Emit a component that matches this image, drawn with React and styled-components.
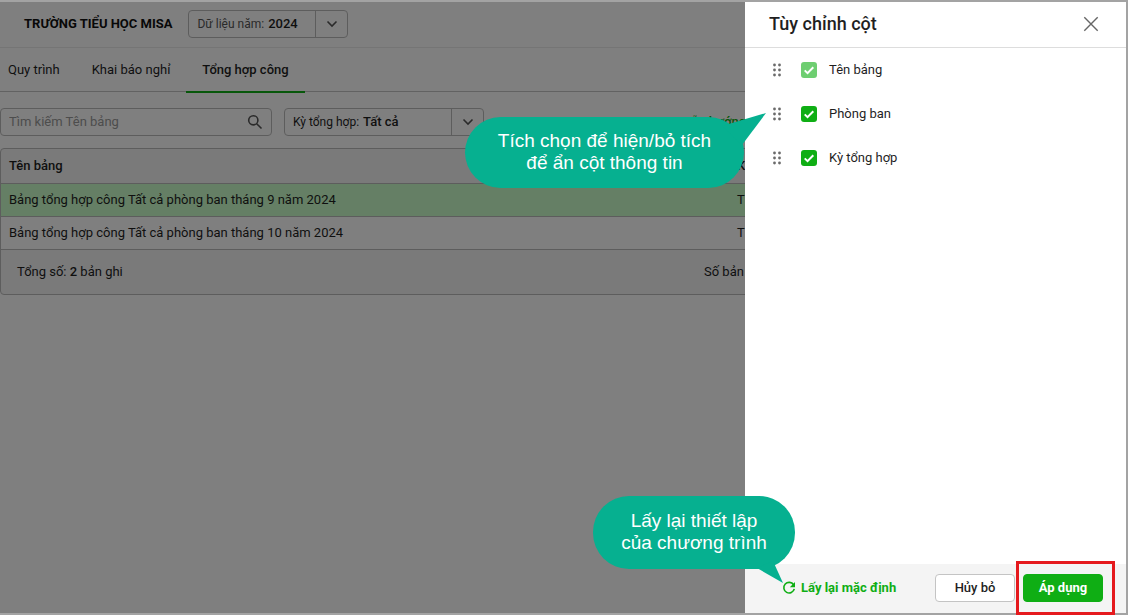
import React, { useState } from "react";
import styled, { createGlobalStyle } from "styled-components";

const GlobalStyle = createGlobalStyle`
  * {
    box-sizing: border-box;
  }
  body {
    margin: 0;
    font-family: Roboto, "Noto Sans", sans-serif;
    font-size: 13px;
    line-height: 16px;
    color: #1f1f1f;
  }
  button, input, select {
    font: inherit;
    color: inherit;
  }
`;

const Frame = styled.div`
  position: relative;
  min-height: 100vh;
  border: 2px solid #a3a3a3;
  border-left: none;
`;

const TopBar = styled.header`
  display: flex;
  align-items: center;
  gap: 16px;
  height: 46px;
  padding: 0 24px 2px;
  background: #fff;
  border-bottom: 1px solid #ebebeb;
  h1 {
    margin: 0;
    font-size: 13px;
    font-weight: 700;
    color: #111;
  }
`;

const SelectBox = styled.div`
  display: flex;
  align-items: center;
  width: ${(props) => props.$width};
  height: 28px;
  padding-left: 8px;
  border: 1px solid #bbb;
  border-radius: 4px;
  background: #fff;
  label {
    font-size: 12px;
    white-space: nowrap;
    color: ${(props) => (props.$soft ? "#555" : "#1f1f1f")};
  }
  select {
    flex: 1;
    min-width: 0;
    height: 26px;
    padding: 0 4px;
    border: none;
    outline: none;
    background: transparent;
    font-weight: 500;
    appearance: none;
  }
`;
const Arrow = styled.span`
  display: flex;
  align-items: center;
  justify-content: center;
  width: 32px;
  height: 26px;
  border-left: 1px solid #bbb;
`;

const Tabs = styled.nav`
  display: flex;
  height: 44px;
  background: #fff;
  border-bottom: 1px solid #c4c4c4;
`;
const Tab = styled.a`
  display: flex;
  align-items: center;
  height: 45px;
  padding: 0 16px;
  border-bottom: 2px solid ${(props) => (props.$active ? "#0fae14" : "transparent")};
  font-weight: ${(props) => (props.$active ? 500 : 400)};
  color: inherit;
  text-decoration: none;
  &:first-child {
    padding-left: 8px;
  }
`;

const Toolbar = styled.div`
  display: flex;
  align-items: center;
  gap: 12px;
  padding: 16px 0 12px;
`;
const SearchBox = styled.div`
  display: flex;
  align-items: center;
  width: 272px;
  height: 28px;
  padding: 0 8px;
  border: 1px solid #bbb;
  border-radius: 4px;
  background: #fff;
  input {
    flex: 1;
    min-width: 0;
    padding: 0;
    border: none;
    outline: none;
    background: transparent;
  }
  input::placeholder {
    color: #9a9a9a;
    opacity: 1;
  }
`;
const GuideLink = styled.a`
  margin-left: 184px;
  font-weight: 500;
  color: #0fae14;
  text-decoration: none;
  white-space: nowrap;
`;

const TableCard = styled.section`
  border: 1px solid #bbb;
  border-radius: 4px;
  background: #f4f4f4;
  overflow: hidden;
`;
const Table = styled.table`
  width: 100%;
  border-collapse: collapse;
  table-layout: fixed;
  th,
  td {
    height: 33px;
    padding: 0 8px;
    border-bottom: 1px solid #bbb;
    text-align: left;
  }
  th {
    height: 34px;
    font-weight: 500;
  }
  th:first-child {
    width: 728px;
  }
`;
const Row = styled.tr`
  background: ${(props) => (props.$active ? "#caffca" : "#fff")};
`;
const TableFooter = styled.footer`
  display: flex;
  height: 44px;
  align-items: center;
  padding: 0 16px;
  b {
    font-weight: 500;
  }
  p {
    flex: 0 0 687px;
    margin: 0;
  }
`;

const Overlay = styled.div`
  position: absolute;
  inset: 0;
  background: rgba(0, 0, 0, 0.5);
`;

const Drawer = styled.aside`
  position: absolute;
  top: 0;
  right: 0;
  bottom: 0;
  display: flex;
  flex-direction: column;
  width: 381px;
  background: #fff;
`;
const DrawerHeader = styled.header`
  display: flex;
  align-items: center;
  justify-content: space-between;
  height: 46px;
  padding: 0 23px 2px 24px;
  border-bottom: 1px solid #ddd;
  h2 {
    margin: 0;
    font-size: 18px;
    line-height: 24px;
    font-weight: 500;
  }
`;
const CloseButton = styled.button`
  display: flex;
  align-items: center;
  justify-content: center;
  width: 24px;
  height: 24px;
  padding: 0;
  border: none;
  background: none;
  cursor: pointer;
`;
const ColumnList = styled.ul`
  flex: 1;
  margin: 0;
  padding: 0 24px;
  list-style: none;
`;
const ColumnItem = styled.li`
  display: flex;
  align-items: center;
  gap: 16px;
  height: 44px;
  label {
    display: flex;
    align-items: center;
    gap: 12px;
  }
`;
const Checkbox = styled.input`
  appearance: none;
  width: 16px;
  height: 16px;
  margin: 0;
  border: 1px solid #bbb;
  border-radius: 3px;
  &:checked {
    border: none;
    background: #0fae14
      url("data:image/svg+xml,%3Csvg xmlns='http://www.w3.org/2000/svg' viewBox='0 0 16 16'%3E%3Cpath d='M3.7 8.4l2.8 2.7 5.8-5.8' fill='none' stroke='%23fff' stroke-width='2'/%3E%3C/svg%3E");
  }
  &:disabled {
    opacity: 0.6;
  }
`;

const DrawerFooter = styled.footer`
  display: flex;
  align-items: center;
  gap: 8px;
  height: 49px;
  padding: 0 23px 2px 36px;
  background: #f4f4f4;
`;
const ResetButton = styled.button`
  display: flex;
  align-items: center;
  gap: 4px;
  margin-right: auto;
  padding: 0;
  border: none;
  background: none;
  font-weight: 700;
  color: #0fae14;
  cursor: pointer;
`;
const Button = styled.button`
  width: 80px;
  height: 28px;
  padding: 0;
  border: 1px solid ${(props) => (props.$primary ? "#0fae14" : "#c4c4c4")};
  border-radius: 4px;
  background: ${(props) => (props.$primary ? "#0fae14" : "#fff")};
  color: ${(props) => (props.$primary ? "#fff" : "#1f1f1f")};
  font-weight: ${(props) => (props.$primary ? 700 : 500)};
  cursor: pointer;
`;
/* red outline that sits around the button */
const Highlight = styled.div`
  position: relative;
  display: flex;
  &::after {
    content: "";
    position: absolute;
    inset: -13px -12px -13px -7px;
    border: 3px solid #e5191d;
    pointer-events: none;
  }
`;

const Callout = styled.div`
  position: absolute;
  display: flex;
  align-items: center;
  justify-content: center;
  padding-bottom: 2px;
  border-radius: 36px;
  background: #06b090;
  color: #fff;
  font-family: "Liberation Sans", Arial, sans-serif;
  font-size: 19px;
  line-height: 22px;
  text-align: center;
  svg {
    position: absolute;
    overflow: visible;
  }
`;
const ColumnCallout = styled(Callout)`
  top: 115px;
  left: -280px;
  width: 279px;
  height: 71px;
  svg {
    top: -4px;
    right: -22px;
  }
`;
const ResetCallout = styled(Callout)`
  bottom: 44px;
  left: -152px;
  width: 202px;
  height: 73px;
  svg {
    right: 12px;
    bottom: -14px;
  }
`;

const ChevronIcon = () => (
  <svg width="12" height="8" viewBox="0 0 12 8" fill="none" stroke="#555" strokeWidth="1.6">
    <path d="M1.5 1.5L6 6l4.5-4.5" />
  </svg>
);
const SearchIcon = () => (
  <svg width="16" height="16" viewBox="0 0 16 16" fill="none" stroke="#555" strokeWidth="1.6">
    <circle cx="6.3" cy="6.3" r="4.6" />
    <path d="M9.7 9.7l4.8 4.8" />
  </svg>
);
const CloseIcon = () => (
  <svg width="16" height="16" viewBox="0 0 16 16" stroke="#666" strokeWidth="1.4">
    <path d="M1.3 1.3l13.4 13.4M14.7 1.3L1.3 14.7" />
  </svg>
);
const GripIcon = () => (
  <svg width="16" height="16" viewBox="0 0 16 16" fill="#6a6a6a">
    {[3, 8, 13].map((y) => (
      <React.Fragment key={y}>
        <circle cx="5.5" cy={y} r="1.4" />
        <circle cx="10.5" cy={y} r="1.4" />
      </React.Fragment>
    ))}
  </svg>
);
const ReloadIcon = () => (
  <svg width="16" height="16" viewBox="0 0 16 16" fill="none">
    <path d="M12.6 4.8A5.3 5.3 0 1 0 13.3 8.9" stroke="#0fae14" strokeWidth="1.6" />
    <path d="M14 2v5.2H8.8z" fill="#0fae14" />
  </svg>
);

const rows = [
  { id: 1, name: "Bảng tổng hợp công Tất cả phòng ban tháng 9 năm 2024", period: "Tháng 9" },
  { id: 2, name: "Bảng tổng hợp công Tất cả phòng ban tháng 10 năm 2024", period: "Tháng 10" },
];

function App() {
  const [columns, setColumns] = useState([
    { id: "name", label: "Tên bảng", checked: true, locked: true },
    { id: "department", label: "Phòng ban", checked: true },
    { id: "period", label: "Kỳ tổng hợp", checked: true },
  ]);

  const handleToggle = (id) => {
    setColumns(columns.map((col) => (col.id === id ? { ...col, checked: !col.checked } : col)));
  };

  return (
    <>
      <GlobalStyle />
      <Frame>
        <TopBar>
          <h1>TRƯỜNG TIỂU HỌC MISA</h1>
          <SelectBox $width="160px" $soft>
            <label htmlFor="year">Dữ liệu năm:</label>
            <select id="year">
              <option>2024</option>
            </select>
            <Arrow>
              <ChevronIcon />
            </Arrow>
          </SelectBox>
        </TopBar>
        <Tabs>
          <Tab href="#process">Quy trình</Tab>
          <Tab href="#leave">Khai báo nghỉ</Tab>
          <Tab href="#summary" $active>
            Tổng hợp công
          </Tab>
        </Tabs>
        <main>
          <Toolbar>
            <SearchBox>
              <input type="text" aria-label="Tìm kiếm" placeholder="Tìm kiếm Tên bảng" />
              <SearchIcon />
            </SearchBox>
            <SelectBox $width="200px">
              <label htmlFor="period">Kỳ tổng hợp:</label>
              <select id="period">
                <option>Tất cả</option>
              </select>
              <Arrow>
                <ChevronIcon />
              </Arrow>
            </SelectBox>
            <GuideLink href="#guide">Mẫu hướng dẫn</GuideLink>
          </Toolbar>
          <TableCard>
            <Table>
              <thead>
                <tr>
                  <th>Tên bảng</th>
                  <th>Kỳ tổng hợp</th>
                </tr>
              </thead>
              <tbody>
                {rows.map((row) => (
                  <Row key={row.id} $active={row.id === 1}>
                    <td>{row.name}</td>
                    <td>{row.period}</td>
                  </Row>
                ))}
              </tbody>
            </Table>
            <TableFooter>
              <p>
                Tổng số: <b>2</b> bản ghi
              </p>
              <span>Số bản ghi/trang</span>
            </TableFooter>
          </TableCard>
        </main>

        <Overlay />

        <Drawer>
          <DrawerHeader>
            <h2>Tùy chỉnh cột</h2>
            <CloseButton aria-label="Đóng">
              <CloseIcon />
            </CloseButton>
          </DrawerHeader>
          <ColumnList>
            {columns.map((col) => (
              <ColumnItem key={col.id}>
                <GripIcon />
                <label>
                  <Checkbox
                    type="checkbox"
                    checked={col.checked}
                    disabled={col.locked}
                    onChange={() => handleToggle(col.id)}
                  />
                  {col.label}
                </label>
              </ColumnItem>
            ))}
          </ColumnList>
          <DrawerFooter>
            <ResetButton>
              <ReloadIcon />
              Lấy lại mặc định
            </ResetButton>
            <Button>Hủy bỏ</Button>
            <Highlight>
              <Button $primary>Áp dụng</Button>
            </Highlight>
          </DrawerFooter>

          <ColumnCallout>
            Tích chọn để hiện/bỏ tích
            <br />
            để ẩn cột thông tin
            <svg width="44" height="34" viewBox="0 0 44 34" fill="#06b090">
              <path d="M44 0L0 13l20 19z" />
            </svg>
          </ColumnCallout>
          <ResetCallout>
            Lấy lại thiết lập
            <br />
            của chương trình
            <svg width="26" height="22" viewBox="0 0 26 22" fill="#06b090">
              <path d="M26 22L0 7l16-7z" />
            </svg>
          </ResetCallout>
        </Drawer>
      </Frame>
    </>
  );
}

export default App;
